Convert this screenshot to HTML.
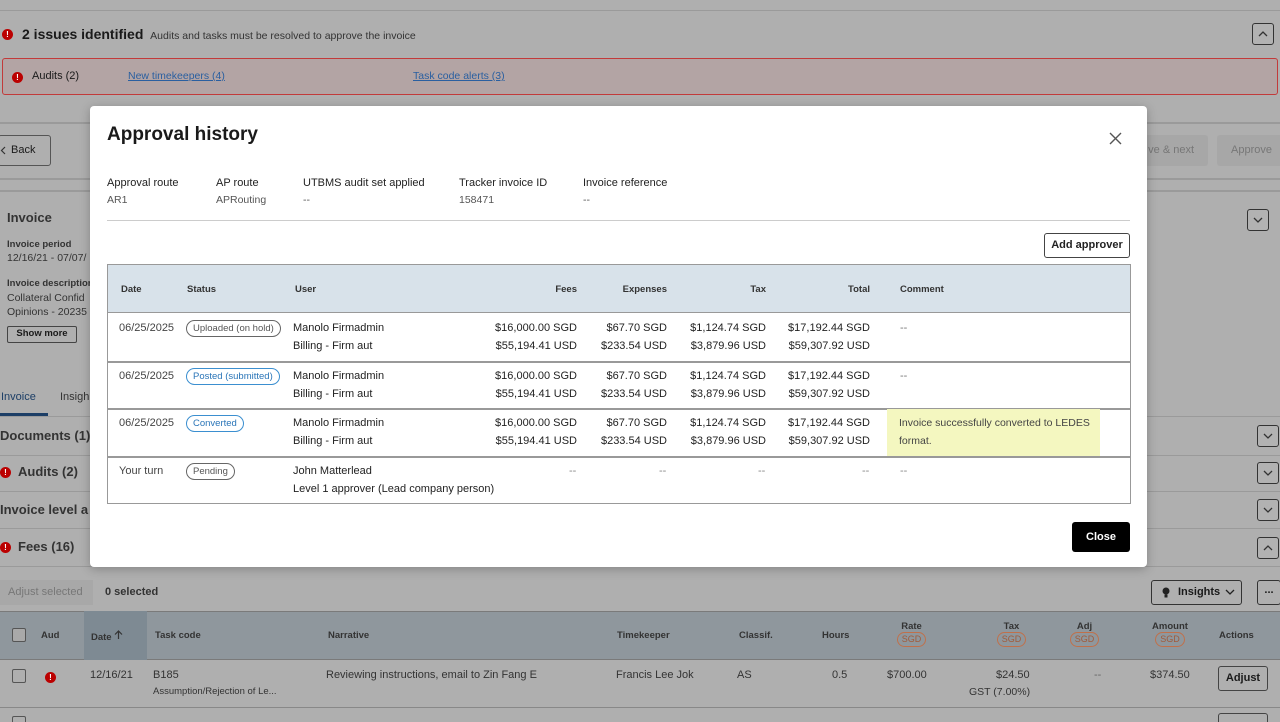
<!DOCTYPE html>
<html><head><meta charset="utf-8"><style>
*{box-sizing:border-box;margin:0;padding:0}
html,body{width:1280px;height:722px;overflow:hidden}
body{background:#afafaf;font-family:"Liberation Sans",sans-serif;color:#1a1a1a;position:relative;font-size:11px}
.a{position:absolute;white-space:nowrap}
.hl{position:absolute;height:2px;background:#9a9a9a;left:0;width:1280px}
.err{display:inline-block;width:11px;height:11px;border-radius:50%;background:#b00;color:#fff;font-size:8px;font-weight:bold;text-align:center;line-height:11px}
.chev{position:absolute;width:22px;height:22px;border:1.5px solid #333;border-radius:3px;background:#b2b2b2}
.chev svg{position:absolute;left:5px;top:5px}
.modal{position:absolute;left:90px;top:106px;width:1057px;height:461px;background:#fff;border-radius:4px;box-shadow:0 2px 10px rgba(0,0,0,.25)}
.m{position:absolute;white-space:nowrap;font-size:11px;color:#222}
.lbl{font-size:11px;color:#222}
.val{font-size:10.5px;color:#555}
.pill{position:absolute;border:1.3px solid #666;border-radius:10px;font-size:9.5px;color:#555;padding:1px 6px;line-height:13px}
.pb{border-color:#3b8fd0;color:#2a75b8}
.r{text-align:right}
.th{font-size:9.5px;font-weight:bold;color:#333}
.sgd{display:inline-block;border:1.3px solid #c0704a;border-radius:9px;font-size:9px;color:#a05a3a;padding:0 4px;line-height:13px;font-weight:normal}
</style></head><body>
<div class="hl" style="top:10px;height:1px"></div>
<div class="a" style="left:2px;top:28px"><span class="err">!</span></div>
<div class="a" style="left:22px;top:26px;font-size:14px;font-weight:bold">2 issues identified <span style="font-size:10.5px;font-weight:normal;color:#333">&nbsp;Audits and tasks must be resolved to approve the invoice</span></div>
<div class="chev" style="left:1252px;top:23px"><svg width="10" height="10" viewBox="0 0 10 10"><path d="M1 7 L5 3 L9 7" fill="none" stroke="#333" stroke-width="1.3"/></svg></div>
<div class="a" style="left:2px;top:58px;width:1276px;height:37px;background:#b3a4a4;border:1.5px solid #c23a3a;border-radius:3px"></div>
<div class="a" style="left:12px;top:71px"><span class="err">!</span></div>
<div class="a" style="left:32px;top:70px;font-size:11px">Audits (2)</div>
<div class="a" style="left:128px;top:70px;font-size:10.5px;color:#2a5fa0;text-decoration:underline">New timekeepers (4)</div>
<div class="a" style="left:413px;top:70px;font-size:10.5px;color:#2a5fa0;text-decoration:underline">Task code alerts (3)</div>
<div class="hl" style="top:122px"></div>
<div class="a" style="left:-2px;top:135px;width:53px;height:31px;border:1.5px solid #555;border-radius:3px;font-size:11px;line-height:28px;padding-left:12px"><svg style="position:absolute;left:1px;top:10px" width="6" height="9" viewBox="0 0 6 9"><path d="M5 1 L1.5 4.5 L5 8" fill="none" stroke="#333" stroke-width="1.2"/></svg>Back</div>
<div class="a" style="left:1120px;top:135px;width:88px;height:31px;background:#a7a7a7;border-radius:3px;font-size:11px;line-height:31px;text-align:right;padding-right:14px;color:#777">ve &amp; next</div>
<div class="a" style="left:1217px;top:135px;width:70px;height:31px;background:#a7a7a7;border-radius:3px;font-size:11px;line-height:31px;padding-left:14px;color:#777">Approve</div>
<div class="hl" style="top:178px"></div>
<div class="hl" style="top:190px"></div>
<div class="a" style="left:7px;top:210px;font-size:13px;font-weight:bold;color:#333">Invoice</div>
<div class="chev" style="left:1247px;top:209px"><svg width="10" height="10" viewBox="0 0 10 10"><path d="M1 3 L5 7 L9 3" fill="none" stroke="#333" stroke-width="1.3"/></svg></div>
<div class="a" style="left:7px;top:239px;font-size:9.5px;font-weight:bold;color:#333">Invoice period</div>
<div class="a" style="left:7px;top:252px;font-size:10.5px;color:#333">12/16/21 - 07/07/</div>
<div class="a" style="left:7px;top:278px;font-size:9.5px;font-weight:bold;color:#333">Invoice description</div>
<div class="a" style="left:7px;top:292px;font-size:10.5px;color:#333">Collateral Confid</div>
<div class="a" style="left:7px;top:306px;font-size:10.5px;color:#333">Opinions - 20235</div>
<div class="a" style="left:7px;top:326px;width:70px;height:17px;border:1.5px solid #444;border-radius:2px;font-size:9.5px;font-weight:bold;text-align:center;line-height:14px">Show more</div>
<div class="a" style="left:1px;top:391px;font-size:11px;color:#1c3e66">Invoice</div>
<div class="a" style="left:60px;top:391px;font-size:11px;color:#333">Insigh</div>
<div class="a" style="left:0;top:413px;width:48px;height:3px;background:#1c3e66"></div>
<div class="hl" style="top:416px;height:1px"></div>
<div class="a" style="left:0;top:428px;font-size:13px;font-weight:bold;color:#333">Documents (1)</div>
<div class="hl" style="top:455px;height:1px"></div>
<div class="a" style="left:0;top:466px"><span class="err">!</span></div>
<div class="a" style="left:18px;top:464px;font-size:13px;font-weight:bold;color:#333">Audits (2)</div>
<div class="hl" style="top:491px;height:1px"></div>
<div class="a" style="left:0;top:502px;font-size:13px;font-weight:bold;color:#333">Invoice level a</div>
<div class="hl" style="top:528px;height:1px"></div>
<div class="a" style="left:0;top:541px"><span class="err">!</span></div>
<div class="a" style="left:18px;top:539px;font-size:13px;font-weight:bold;color:#333">Fees (16)</div>
<div class="hl" style="top:566px;height:1px"></div>
<div class="chev" style="left:1257px;top:425px"><svg width="10" height="10" viewBox="0 0 10 10"><path d="M1 3 L5 7 L9 3" fill="none" stroke="#333" stroke-width="1.3"/></svg></div>
<div class="chev" style="left:1257px;top:462px"><svg width="10" height="10" viewBox="0 0 10 10"><path d="M1 3 L5 7 L9 3" fill="none" stroke="#333" stroke-width="1.3"/></svg></div>
<div class="chev" style="left:1257px;top:499px"><svg width="10" height="10" viewBox="0 0 10 10"><path d="M1 3 L5 7 L9 3" fill="none" stroke="#333" stroke-width="1.3"/></svg></div>
<div class="chev" style="left:1257px;top:537px"><svg width="10" height="10" viewBox="0 0 10 10"><path d="M1 7 L5 3 L9 7" fill="none" stroke="#333" stroke-width="1.3"/></svg></div>
<div class="a" style="left:0;top:580px;width:93px;height:25px;background:#a8a8a8;font-size:11px;color:#777;line-height:25px;padding-left:8px">Adjust selected</div>
<div class="a" style="left:105px;top:586px;font-size:11px;font-weight:bold;color:#333">0 selected</div>
<div class="a" style="left:1151px;top:580px;width:91px;height:25px;border:1.5px solid #333;border-radius:3px;font-size:11px;font-weight:bold;line-height:22px;padding-left:26px">Insights<svg style="position:absolute;left:8px;top:5px" width="12" height="13" viewBox="0 0 12 13"><circle cx="6" cy="5" r="3.5" fill="#222"/><rect x="4.5" y="8.5" width="3" height="3" fill="#222"/></svg><svg style="position:absolute;left:73px;top:8px" width="10" height="7" viewBox="0 0 10 7"><path d="M1 1 L5 5 L9 1" fill="none" stroke="#222" stroke-width="1.3"/></svg></div>
<div class="a" style="left:1257px;top:580px;width:24px;height:25px;border:1.5px solid #333;border-radius:3px;font-size:11px;font-weight:bold;line-height:18px;text-align:center">...</div>
<div class="a" style="left:0;top:611px;width:1280px;height:49px;background:#8f979d;border-top:1px solid #7a7a7a;border-bottom:1px solid #7a7a7a"></div>
<div class="a" style="left:84px;top:611px;width:63px;height:49px;background:#7e8a93"></div>
<div class="a" style="left:12px;top:628px;width:14px;height:14px;border:1.5px solid #555;border-radius:2px;background:#a9a9a9"></div>
<div class="a th" style="left:41px;top:630px">Aud</div>
<div class="a th" style="left:91px;top:630px">Date <svg width="9" height="10" viewBox="0 0 9 10"><path d="M4.5 9 V1 M1 4.5 L4.5 1 L8 4.5" fill="none" stroke="#333" stroke-width="1.2"/></svg></div>
<div class="a th" style="left:155px;top:630px">Task code</div>
<div class="a th" style="left:328px;top:630px">Narrative</div>
<div class="a th" style="left:617px;top:630px">Timekeeper</div>
<div class="a th" style="left:739px;top:630px">Classif.</div>
<div class="a th" style="left:822px;top:630px">Hours</div>
<div class="a th" style="left:895px;top:621px;text-align:center;width:33px">Rate<br><span class="sgd">SGD</span></div>
<div class="a th" style="left:995px;top:621px;text-align:center;width:33px">Tax<br><span class="sgd">SGD</span></div>
<div class="a th" style="left:1068px;top:621px;text-align:center;width:33px">Adj<br><span class="sgd">SGD</span></div>
<div class="a th" style="left:1150px;top:621px;text-align:center;width:40px">Amount<br><span class="sgd">SGD</span></div>
<div class="a th" style="left:1219px;top:630px">Actions</div>
<div class="a" style="left:12px;top:669px;width:14px;height:14px;border:1.5px solid #555;border-radius:2px"></div>
<div class="a" style="left:45px;top:671px"><span class="err">!</span></div>
<div class="a" style="left:90px;top:669px;font-size:11px;color:#333">12/16/21</div>
<div class="a" style="left:153px;top:669px;font-size:11px;color:#333">B185</div>
<div class="a" style="left:153px;top:686px;font-size:9.5px;color:#333">Assumption/Rejection of Le...</div>
<div class="a" style="left:326px;top:669px;font-size:11px;color:#333">Reviewing instructions, email to Zin Fang E</div>
<div class="a" style="left:616px;top:669px;font-size:11px;color:#333">Francis Lee Jok</div>
<div class="a" style="left:737px;top:669px;font-size:11px;color:#333">AS</div>
<div class="a" style="left:832px;top:669px;font-size:11px;color:#333">0.5</div>
<div class="a" style="left:887px;top:669px;font-size:11px;color:#333">$700.00</div>
<div class="a" style="left:996px;top:669px;font-size:11px;color:#333">$24.50</div>
<div class="a" style="left:969px;top:686px;font-size:10.5px;color:#333">GST (7.00%)</div>
<div class="a" style="left:1094px;top:669px;font-size:11px;color:#666">--</div>
<div class="a" style="left:1150px;top:669px;font-size:11px;color:#333">$374.50</div>
<div class="a" style="left:1218px;top:666px;width:50px;height:25px;border:1.5px solid #444;border-radius:3px;font-size:11px;font-weight:bold;text-align:center;line-height:22px">Adjust</div>
<div class="hl" style="top:707px;height:1px;background:#888"></div>
<div class="a" style="left:12px;top:716px;width:14px;height:14px;border:1.5px solid #555;border-radius:2px"></div>
<div class="a" style="left:1218px;top:713px;width:50px;height:25px;border:1.5px solid #444;border-radius:3px"></div>

<div class="modal">
<div class="m" style="left:17px;top:18px;font-size:19px;font-weight:bold;color:#1a1a1a">Approval history</div>
<svg class="m" style="left:1019px;top:26px" width="13" height="13" viewBox="0 0 13 13"><path d="M1 1 L12 12 M12 1 L1 12" stroke="#555" stroke-width="1.4"/></svg>
<div class="m lbl" style="left:17px;top:71px">Approval route</div><div class="m val" style="left:17px;top:88px">AR1</div>
<div class="m lbl" style="left:126px;top:71px">AP route</div><div class="m val" style="left:126px;top:88px">APRouting</div>
<div class="m lbl" style="left:213px;top:71px">UTBMS audit set applied</div><div class="m val" style="left:213px;top:88px">--</div>
<div class="m lbl" style="left:369px;top:71px">Tracker invoice ID</div><div class="m val" style="left:369px;top:88px">158471</div>
<div class="m lbl" style="left:493px;top:71px">Invoice reference</div><div class="m val" style="left:493px;top:88px">--</div>
<div class="m" style="left:17px;top:114px;width:1023px;height:1px;background:#ccc"></div>
<div class="m" style="left:954px;top:127px;width:86px;height:25px;border:1.5px solid #444;border-radius:3px;font-weight:bold;text-align:center;line-height:22px">Add approver</div>
<div class="m" style="left:17px;top:158px;width:1024px;height:240px;border:1.5px solid #999"></div>
<div class="m" style="left:18px;top:159px;width:1022px;height:48px;background:#d8e2ea;border-bottom:1.5px solid #999"></div>
<div class="m th" style="left:31px;top:178px">Date</div>
<div class="m th" style="left:97px;top:178px">Status</div>
<div class="m th" style="left:205px;top:178px">User</div>
<div class="m th r" style="left:437px;top:178px;width:50px">Fees</div>
<div class="m th r" style="left:517px;top:178px;width:60px">Expenses</div>
<div class="m th r" style="left:626px;top:178px;width:50px">Tax</div>
<div class="m th r" style="left:730px;top:178px;width:50px">Total</div>
<div class="m th" style="left:810px;top:178px">Comment</div>

<div class="m" style="left:18px;top:255px;width:1022px;height:1.5px;background:#999"></div>
<div class="m" style="left:18px;top:302px;width:1022px;height:1.5px;background:#999"></div>
<div class="m" style="left:18px;top:350px;width:1022px;height:1.5px;background:#999"></div>
<div class="m" style="left:797px;top:303px;width:213px;height:47px;background:#f4f7c0"></div>

<div class="m" style="left:29px;top:216px;color:#444">06/25/2025</div>
<div class="pill" style="left:96px;top:214px">Uploaded (on hold)</div>
<div class="m" style="left:203px;top:216px">Manolo Firmadmin</div><div class="m" style="left:203px;top:234px">Billing - Firm aut</div>
<div class="m r" style="left:387px;top:216px;width:100px">$16,000.00 SGD</div><div class="m r" style="left:387px;top:234px;width:100px">$55,194.41 USD</div>
<div class="m r" style="left:497px;top:216px;width:80px">$67.70 SGD</div><div class="m r" style="left:497px;top:234px;width:80px">$233.54 USD</div>
<div class="m r" style="left:586px;top:216px;width:90px">$1,124.74 SGD</div><div class="m r" style="left:586px;top:234px;width:90px">$3,879.96 USD</div>
<div class="m r" style="left:680px;top:216px;width:100px">$17,192.44 SGD</div><div class="m r" style="left:680px;top:234px;width:100px">$59,307.92 USD</div>
<div class="m" style="left:810px;top:216px;color:#777">--</div>

<div class="m" style="left:29px;top:264px;color:#444">06/25/2025</div>
<div class="pill pb" style="left:96px;top:262px">Posted (submitted)</div>
<div class="m" style="left:203px;top:264px">Manolo Firmadmin</div><div class="m" style="left:203px;top:282px">Billing - Firm aut</div>
<div class="m r" style="left:387px;top:264px;width:100px">$16,000.00 SGD</div><div class="m r" style="left:387px;top:282px;width:100px">$55,194.41 USD</div>
<div class="m r" style="left:497px;top:264px;width:80px">$67.70 SGD</div><div class="m r" style="left:497px;top:282px;width:80px">$233.54 USD</div>
<div class="m r" style="left:586px;top:264px;width:90px">$1,124.74 SGD</div><div class="m r" style="left:586px;top:282px;width:90px">$3,879.96 USD</div>
<div class="m r" style="left:680px;top:264px;width:100px">$17,192.44 SGD</div><div class="m r" style="left:680px;top:282px;width:100px">$59,307.92 USD</div>
<div class="m" style="left:810px;top:264px;color:#777">--</div>

<div class="m" style="left:29px;top:311px;color:#444">06/25/2025</div>
<div class="pill pb" style="left:96px;top:309px">Converted</div>
<div class="m" style="left:203px;top:311px">Manolo Firmadmin</div><div class="m" style="left:203px;top:329px">Billing - Firm aut</div>
<div class="m r" style="left:387px;top:311px;width:100px">$16,000.00 SGD</div><div class="m r" style="left:387px;top:329px;width:100px">$55,194.41 USD</div>
<div class="m r" style="left:497px;top:311px;width:80px">$67.70 SGD</div><div class="m r" style="left:497px;top:329px;width:80px">$233.54 USD</div>
<div class="m r" style="left:586px;top:311px;width:90px">$1,124.74 SGD</div><div class="m r" style="left:586px;top:329px;width:90px">$3,879.96 USD</div>
<div class="m r" style="left:680px;top:311px;width:100px">$17,192.44 SGD</div><div class="m r" style="left:680px;top:329px;width:100px">$59,307.92 USD</div>
<div class="m" style="left:809px;top:311px;color:#444;font-size:10.5px">Invoice successfully converted to LEDES</div><div class="m" style="left:809px;top:329px;color:#444;font-size:10.5px">format.</div>

<div class="m" style="left:29px;top:359px;color:#444">Your turn</div>
<div class="pill" style="left:96px;top:357px">Pending</div>
<div class="m" style="left:203px;top:359px">John Matterlead</div><div class="m" style="left:203px;top:377px">Level 1 approver (Lead company person)</div>
<div class="m" style="left:479px;top:359px;color:#888">--</div>
<div class="m" style="left:569px;top:359px;color:#888">--</div>
<div class="m" style="left:668px;top:359px;color:#888">--</div>
<div class="m" style="left:772px;top:359px;color:#888">--</div>
<div class="m" style="left:810px;top:359px;color:#888">--</div>
<div class="m" style="left:982px;top:416px;width:58px;height:30px;background:#000;border-radius:3px;color:#fff;font-weight:bold;text-align:center;line-height:30px">Close</div>
</div>
</body></html>
